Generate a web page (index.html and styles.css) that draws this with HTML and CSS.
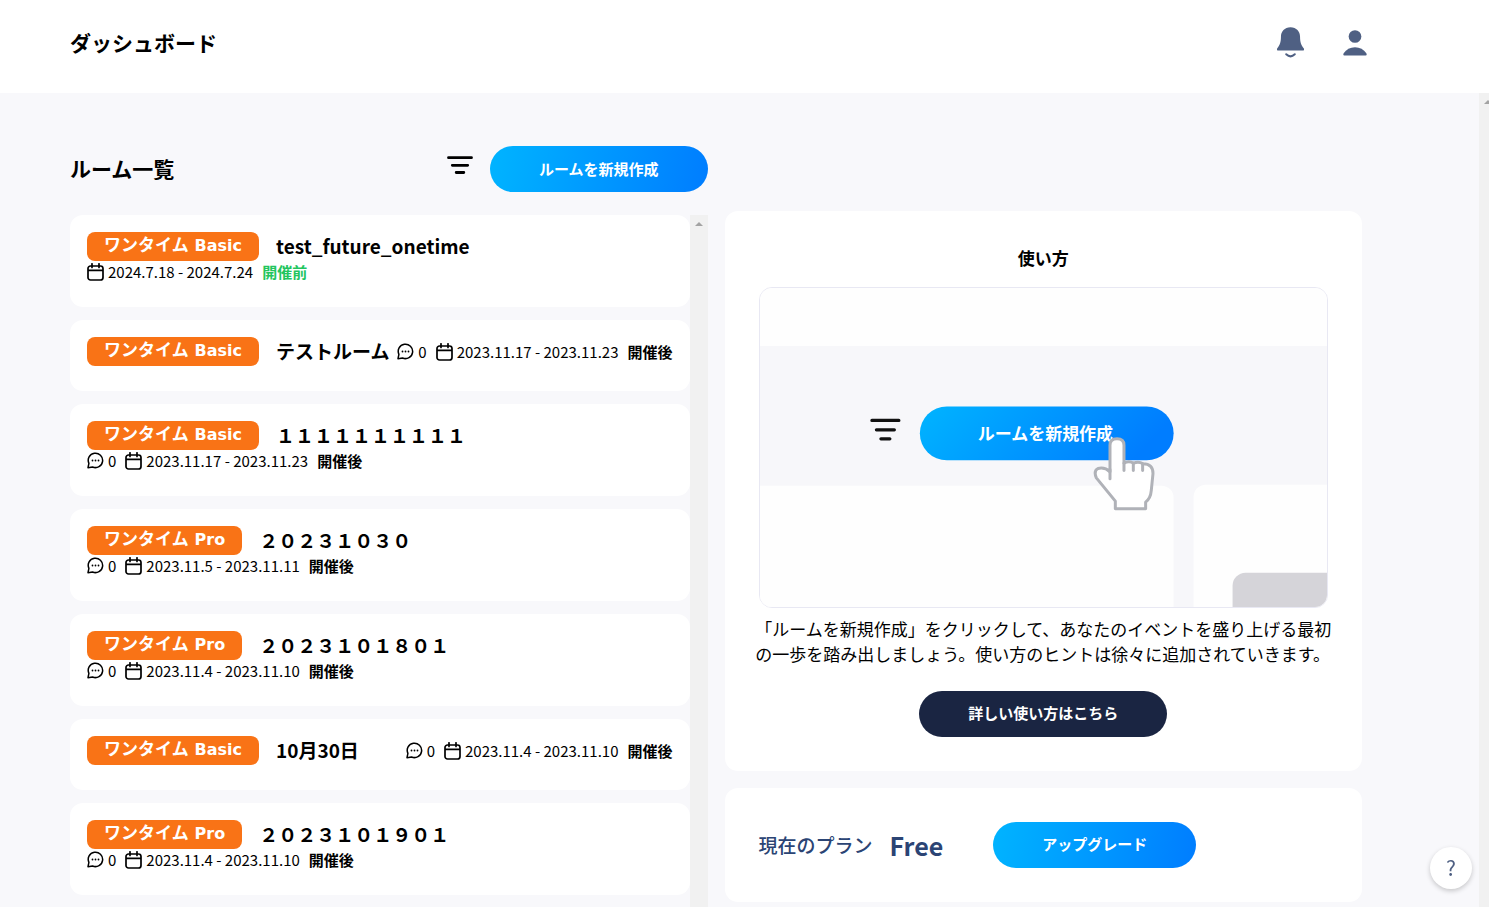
FILE: index.html
```html
<!DOCTYPE html>
<html lang="ja">
<head>
  <meta charset="UTF-8" />
  <meta name="viewport" content="width=device-width, initial-scale=1.0"/>
  <title>ダッシュボード</title>
  <link rel="stylesheet" href="styles.css">
</head>
<body>
  <!-- shared icons -->
  <svg class="sprite" aria-hidden="true">
    <symbol id="calendar" viewBox="0 0 17 18">
      <path d="M3.500 3h10a2.500 2.500 0 0 1 2.500 2.500v9a2.500 2.500 0 0 1-2.500 2.500h-10A2.500 2.500 0 0 1 1 14.500v-9A2.500 2.500 0 0 1 3.500 3zM1 7.300h15M5 .8v3.700M12 .8v3.700" fill="none" stroke="#000" stroke-width="1.700" stroke-linecap="round"/>
    </symbol>
    <symbol id="comment" viewBox="0 0 17 17">
      <path d="M1 15.700l.9-4.300A7.200 7.200 0 1 1 5.600 15z" fill="none" stroke="#000" stroke-width="1.500" stroke-linejoin="round"/>
      <circle cx="5.500" cy="8.500" r=".9"/><circle cx="8.500" cy="8.500" r=".9"/><circle cx="11.500" cy="8.500" r=".9"/>
    </symbol>
    <symbol id="filter" viewBox="0 0 26 18">
      <path d="M1.500 1.700h23M5.300 9.300h15.400M9.200 16.500h7.600" stroke="#000" stroke-width="2.800" stroke-linecap="round"/>
    </symbol>
  </svg>

  <header class="topbar">
    <h1>ダッシュボード</h1>
    <div class="topbar-actions">
      <button class="icon-btn" aria-label="お知らせ">
        <svg width="27" height="31" viewBox="112 82 82 93" fill="#4f6083">
          <path d="M153 82c18 0 29 13 29 29 0 16 3 25 11 35 3 4 1 7-3 7h-74c-4 0-6-3-3-7 8-10 11-19 11-35 0-16 11-29 29-29z"/>
          <path d="M140 164q13 13 26 0" fill="none" stroke="#4f6083" stroke-width="6" stroke-linecap="round"/>
        </svg>
      </button>
      <button class="icon-btn" aria-label="アカウント">
        <svg width="24" height="26" viewBox="310 90 72 77" fill="#4f6083">
          <circle cx="346" cy="109" r="19"/>
          <path d="M314 166q-5-1-2-7 12-18 34-18t34 18q3 6-2 7z"/>
        </svg>
      </button>
    </div>
  </header>

  <div class="page">
    <main class="columns">
      <section class="rooms">
        <div class="rooms-head">
          <h2>ルーム一覧</h2>
          <button class="icon-btn filter-btn" aria-label="絞り込み"><svg width="26" height="18"><use href="#filter"/></svg></button>
          <button class="btn btn-blue">ルームを新規作成</button>
        </div>
        <div class="rooms-scroll">
          <div class="room-list">
            <article class="room">
              <span class="badge">ワンタイム <b>Basic</b></span>
              <h3>test_future_onetime</h3>
              <div class="meta">
                <span class="item"><svg class="cal"><use href="#calendar"/></svg>2024.7.18 - 2024.7.24</span>
                <span class="status before">開催前</span>
              </div>
            </article>
            <article class="room">
              <span class="badge">ワンタイム <b>Basic</b></span>
              <h3>テストルーム</h3>
              <div class="meta">
                <span class="item"><svg class="com"><use href="#comment"/></svg>0</span>
                <span class="item"><svg class="cal"><use href="#calendar"/></svg>2023.11.17 - 2023.11.23</span>
                <span class="status">開催後</span>
              </div>
            </article>
            <article class="room">
              <span class="badge">ワンタイム <b>Basic</b></span>
              <h3>１１１１１１１１１１</h3>
              <div class="meta">
                <span class="item"><svg class="com"><use href="#comment"/></svg>0</span>
                <span class="item"><svg class="cal"><use href="#calendar"/></svg>2023.11.17 - 2023.11.23</span>
                <span class="status">開催後</span>
              </div>
            </article>
            <article class="room">
              <span class="badge">ワンタイム <b>Pro</b></span>
              <h3>２０２３１０３０</h3>
              <div class="meta">
                <span class="item"><svg class="com"><use href="#comment"/></svg>0</span>
                <span class="item"><svg class="cal"><use href="#calendar"/></svg>2023.11.5 - 2023.11.11</span>
                <span class="status">開催後</span>
              </div>
            </article>
            <article class="room">
              <span class="badge">ワンタイム <b>Pro</b></span>
              <h3>２０２３１０１８０１</h3>
              <div class="meta">
                <span class="item"><svg class="com"><use href="#comment"/></svg>0</span>
                <span class="item"><svg class="cal"><use href="#calendar"/></svg>2023.11.4 - 2023.11.10</span>
                <span class="status">開催後</span>
              </div>
            </article>
            <article class="room">
              <span class="badge">ワンタイム <b>Basic</b></span>
              <h3>10月30日</h3>
              <div class="meta">
                <span class="item"><svg class="com"><use href="#comment"/></svg>0</span>
                <span class="item"><svg class="cal"><use href="#calendar"/></svg>2023.11.4 - 2023.11.10</span>
                <span class="status">開催後</span>
              </div>
            </article>
            <article class="room">
              <span class="badge">ワンタイム <b>Pro</b></span>
              <h3>２０２３１０１９０１</h3>
              <div class="meta">
                <span class="item"><svg class="com"><use href="#comment"/></svg>0</span>
                <span class="item"><svg class="cal"><use href="#calendar"/></svg>2023.11.4 - 2023.11.10</span>
                <span class="status">開催後</span>
              </div>
            </article>
          </div>
          <div class="track" aria-hidden="true"></div>
        </div>
      </section>

      <section class="side">
        <div class="panel guide">
          <h2>使い方</h2>
          <svg class="guide-img" viewBox="0 0 568 319" role="img">
            <defs>
              <linearGradient id="blue" x1="0" y1="0" x2="1" y2="0.2">
                <stop offset="0" stop-color="#00b4ff"/>
                <stop offset="1" stop-color="#007dff"/>
              </linearGradient>
            </defs>
            <rect width="568" height="319" fill="#fefefe"/>
            <rect y="58" width="568" height="262" fill="#f7f7fa"/>
            <rect x="-20" y="198" width="434" height="140" rx="12" fill="#fefefe"/>
            <rect x="434" y="197" width="160" height="140" rx="12" fill="#fefefe"/>
            <rect x="473" y="285" width="120" height="60" rx="13" fill="#d5d4d9"/>
            <path d="M112 132.500h27M116.500 142h18M121 151h9" stroke="#111" stroke-width="3.200" stroke-linecap="round"/>
            <rect x="160" y="118.500" width="254" height="54" rx="27" fill="url(#blue)"/>
            <text class="guide-text" x="218" y="152">ルームを新規作成</text>
            <!-- pointing hand -->
            <g transform="translate(91 102) scale(.3333)" stroke="#b0b2b8" stroke-width="9" stroke-linejoin="round" stroke-linecap="round">
              <path fill="#fff" d="M794 357H885V337Q900 326 902 302L907 252Q908 222 877 222 864 213 849 220 835 211 820 220V166Q820 147 799 147 778 147 778 166V246Q762 231 742 236 728 243 737 264L794 334Z"/>
              <path fill="none" d="M820 220v22M848 220v22M876 222v20M778 240v27"/>
            </g>
          </svg>
          <p>「ルームを新規作成」をクリックして、あなたのイベントを盛り上げる最初<br>の一歩を踏み出しましょう。使い方のヒントは徐々に追加されていきます。</p>
          <button class="btn btn-dark">詳しい使い方はこちら</button>
        </div>
        <div class="panel plan">
          <span class="plan-label">現在のプラン</span>
          <strong>Free</strong>
          <button class="btn btn-blue">アップグレード</button>
        </div>
      </section>
    </main>
    <div class="track page-track" aria-hidden="true"></div>
  </div>

  <button class="help-btn" aria-label="ヘルプ">?</button>
</body>
</html>
```
FILE: styles.css
```css
* {
  box-sizing: border-box;
}
body {
  margin: 0;
  height: 100vh;
  display: flex;
  flex-direction: column;
  overflow: hidden;
  font-family: 'Noto Sans CJK JP', sans-serif;
  font-size: 17px;
  color: #000;
  background: #f8f8fb;
}
h1, h2, h3, p {
  margin: 0;
}
button {
  font-family: inherit;
  border: none;
  cursor: pointer;
}
.sprite {
  display: none;
}
.topbar {
  flex: none;
  height: 93px;
  padding: 0 122px 8px 70px;
  background: #fff;
  display: flex;
  align-items: center;
  justify-content: space-between;
}
h1, .rooms-head h2 {
  padding-bottom: 2px;
  font-size: 21px;
  font-weight: 700;
}
.topbar-actions {
  display: flex;
  align-items: center;
  gap: 39px;
}
.icon-btn {
  padding: 0;
  background: none;
}
.icon-btn svg {
  display: block;
}
.page {
  flex: 1;
  min-height: 0;
  display: flex;
}
.columns {
  flex: 1;
  display: grid;
  grid-template-columns: repeat(2, minmax(0, 1fr));
  grid-template-rows: 100%;
  gap: 17px;
  padding: 0 117px 0 70px;
}
.track {
  flex: none;
  width: 18px;
  background: #f1f1f1;
  overflow: hidden;
}
.track::before {
  content: '';
  display: block;
  width: 0;
  margin: 7px auto 0;
  border: 4px solid transparent;
  border-top: none;
  border-bottom-color: #a3a3a3;
}
.page-track {
  width: 10px;
}
.page-track::before {
  margin-left: 5px;
}

/* rooms */
.rooms {
  display: flex;
  flex-direction: column;
  min-height: 0;
  padding-top: 53px;
}
.rooms-head {
  display: flex;
  align-items: center;
  margin-bottom: 23px;
}
.rooms-head h2 {
  flex: 1;
}
.filter-btn {
  margin-right: 17px;
  padding-bottom: 9px;
}
.btn {
  height: 46px;
  padding: 0 49px 2px;
  border-radius: 23px;
  color: #fff;
  font-size: 15px;
  font-weight: 700;
}
.btn-blue {
  background: linear-gradient(100deg, #00b4ff, #007dff);
}
.btn-dark {
  background: #1a2542;
}
.rooms-scroll {
  flex: 1;
  min-height: 0;
  display: flex;
  overflow: hidden;
}
.room-list {
  flex: 1;
  display: flex;
  flex-direction: column;
  gap: 13px;
}
.room {
  flex: none;
  display: flex;
  flex-wrap: wrap;
  align-items: center;
  padding: 17px 17px 25px;
  background: #fff;
  border-radius: 13px;
}
.badge {
  height: 29px;
  padding: 0 17px;
  margin-right: 17px;
  border-radius: 8px;
  background: #f97316;
  color: #fff;
  font-weight: 700;
  line-height: 24px;
}
.badge b {
  margin-left: 2px;
  font-family: 'DejaVu Sans', sans-serif;
  font-size: 16px;
}
.room h3 {
  flex: none;
  margin-right: auto;
  padding-bottom: 2px;
  font-size: 19px;
  font-weight: 700;
  line-height: 27px;
}
.meta {
  display: flex;
  align-items: center;
  gap: 9px;
  font-size: 15px;
  line-height: 21px;
}
.item {
  display: flex;
  align-items: center;
  gap: 4px;
}
.cal {
  width: 17px;
  height: 18px;
}
.com {
  width: 17px;
  height: 17px;
}
.status {
  font-weight: 700;
}
.before {
  color: #22c55e;
}

/* right column */
.side {
  display: flex;
  flex-direction: column;
  gap: 17px;
  padding-top: 118px;
}
.panel {
  flex: none;
  padding: 34px;
  background: #fff;
  border-radius: 13px;
}
.guide {
  display: flex;
  flex-direction: column;
  align-items: center;
}
.guide h2 {
  font-size: 17px;
  font-weight: 700;
  line-height: 25px;
  margin-bottom: 17px;
}
.guide-img {
  display: block;
  width: 100%;
  border: 1px solid #e8e8f3;
  border-radius: 13px;
}
.guide-text {
  fill: #fff;
  font-size: 17px;
  font-weight: 700;
}
.guide p {
  margin: 8px 0 25px;
  line-height: 25px;
  white-space: nowrap;
}
.plan {
  display: flex;
  align-items: center;
  color: #2b4474;
}
.plan-label {
  font-size: 19px;
  font-weight: 500;
}
.plan strong {
  margin: 0 50px 0 17px;
  font-size: 25px;
  font-weight: 700;
  line-height: 44px;
}
.help-btn {
  position: fixed;
  right: 17px;
  bottom: 18px;
  width: 42px;
  height: 42px;
  padding: 0 0 2px;
  border-radius: 50%;
  background: #fff;
  color: #4f6083;
  font-size: 21px;
  box-shadow: 0 2px 5px rgba(0,0,0,0.2);
}
```
